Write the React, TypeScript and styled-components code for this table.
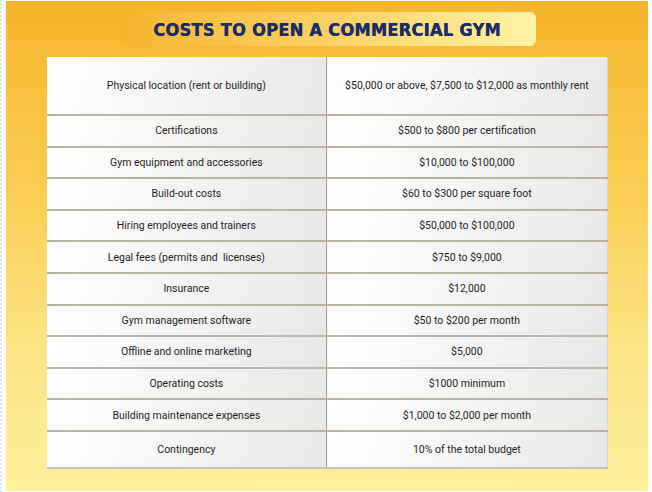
import React, { FC } from "react";
import styled, { createGlobalStyle } from "styled-components";

const GlobalStyle = createGlobalStyle`
  html, body {
    margin: 0;
    padding: 0;
    background: #ffffff;
  }
`;

interface ICostRow {
  item: string;
  cost: string;
  tall?: boolean;
}

const rows: ICostRow[] = [
  { item: "Physical location (rent or building)", cost: "$50,000 or above, $7,500 to $12,000 as monthly rent", tall: true },
  { item: "Certifications", cost: "$500 to $800 per certification" },
  { item: "Gym equipment and accessories", cost: "$10,000 to $100,000" },
  { item: "Build-out costs", cost: "$60 to $300 per square foot" },
  { item: "Hiring employees and trainers", cost: "$50,000 to $100,000" },
  { item: "Legal fees (permits and  licenses)", cost: "$750 to $9,000" },
  { item: "Insurance", cost: "$12,000" },
  { item: "Gym management software", cost: "$50 to $200 per month" },
  { item: "Offline and online marketing", cost: "$5,000" },
  { item: "Operating costs", cost: "$1000 minimum" },
  { item: "Building maintenance expenses", cost: "$1,000 to $2,000 per month" },
  { item: "Contingency", cost: "10% of the total budget" },
];

const Page = styled.div`
  width: 652px;
  height: 492px;
  padding: 1px 4px 1px 4px;
  box-sizing: border-box;
  border-left: 2px dotted #e4e4e4;
`;

const Panel = styled.section`
  height: 100%;
  box-sizing: border-box;
  padding-top: 11px;
  display: flex;
  flex-direction: column;
  align-items: center;
  gap: 11px;
  background: linear-gradient(180deg, #f6b52b 0%, #f9cf55 40%, #fde68a 75%, #fff09c 100%);
`;

const Banner = styled.h1`
  margin: 0;
  width: 418px;
  height: 34px;
  display: flex;
  align-items: center;
  justify-content: center;
  border-radius: 6px;
  background: linear-gradient(90deg, #f6b62e 0%, #fbd46a 55%, #fff3a6 100%);
  font-family: "DejaVu Sans Condensed", "DejaVu Sans", sans-serif;
  font-weight: 700;
  font-size: 18px;
  letter-spacing: 0.3px;
  color: #1b2c66;
  text-shadow: 0.4px 0 0 #1b2c66;
  text-transform: uppercase;
`;

const Table = styled.table`
  width: 561px;
  border-collapse: collapse;
  table-layout: fixed;
  border-bottom: 2px solid #c4c2bd;
  border-right: 1px solid #d8d6d2;
`;

const Row = styled.tr<{ $tall?: boolean }>`
  height: ${(p) => (p.$tall ? "58px" : "31.6px")};
  &:last-child {
    height: 37px;
  }
  &:not(:last-child) td {
    border-bottom: 2px solid #bcb4a3;
  }
`;

const Cell = styled.td`
  padding: 0 8px;
  text-align: center;
  vertical-align: middle;
  white-space: pre-wrap;
  font-family: Roboto, "Liberation Sans", sans-serif;
  font-size: 10.5px;
  color: #1e1e1e;
  background: linear-gradient(110deg, #ffffff 0%, #f4f4f4 50%, #e8e8e8 100%);
  & + & {
    border-left: 1px solid #a79f8d;
  }
`;

const App: FC = () => (
  <>
    <GlobalStyle />
    <Page>
      <Panel>
        <Banner>Costs to open a commercial gym</Banner>
        <Table>
          <tbody>
            {rows.map((r) => (
              <Row key={r.item} $tall={r.tall}>
                <Cell>{r.item}</Cell>
                <Cell>{r.cost}</Cell>
              </Row>
            ))}
          </tbody>
        </Table>
      </Panel>
    </Page>
  </>
);

export default App;
